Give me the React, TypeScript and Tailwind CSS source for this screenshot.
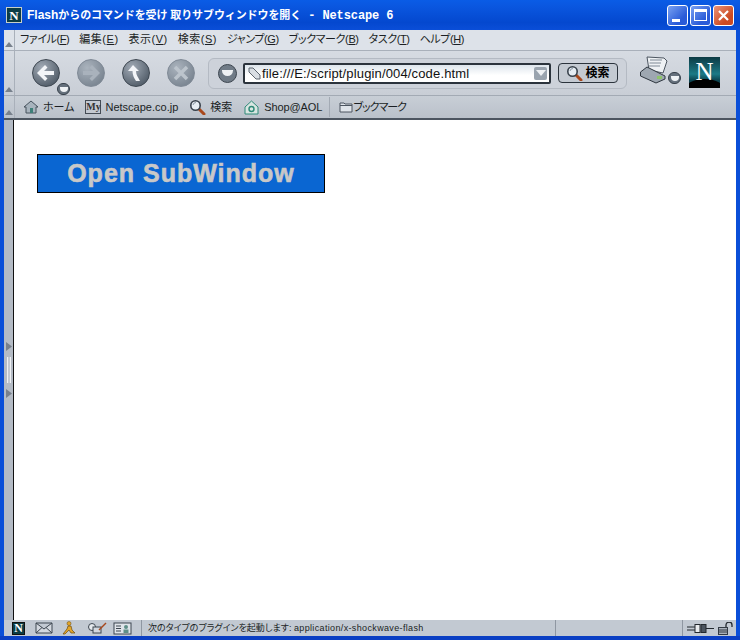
const jp = "font-['Liberation_Sans','Noto_Sans_CJK_JP',sans-serif] [font-feature-settings:'palt']";

function Grip({ className = "" }: { className?: string }) {
  return (
    <div className={`w-[11px] shrink-0 self-stretch flex items-end justify-center pb-[3px] border-r border-[#a9b0ba] ${className}`}>
      <svg width="8" height="5">
        <polygon points="4,0 8,5 0,5" fill="#77808c" />
      </svg>
    </div>
  );
}

function RoundBtn({ dim, children }: { dim?: boolean; children: React.ReactNode }) {
  return (
    <div
      className={`w-[28px] h-[28px] rounded-full flex items-center justify-center border ${
        dim
          ? "border-[#7f8995] bg-[radial-gradient(circle_at_35%_30%,#aab3bd,#7c8793_75%)]"
          : "border-[#3d4650] bg-[radial-gradient(circle_at_35%_30%,#a2abb6,#56616d_75%)]"
      }`}
    >
      {children}
    </div>
  );
}

function SmallDrop({ className = "" }: { className?: string }) {
  return (
    <div className={`w-[13px] h-[12px] rounded-full border border-[#37404a] bg-[#66717d] flex items-center justify-center ${className}`}>
      <div className="w-[8px] h-[5px] rounded-b-full bg-[#f0f3f6]" />
    </div>
  );
}

function Magnifier() {
  return (
    <svg width="17" height="16" viewBox="0 0 17 16">
      <line x1="10" y1="10" x2="15" y2="15" stroke="#a8481c" strokeWidth="3" strokeLinecap="round" />
      <circle cx="6.5" cy="6.5" r="4.7" fill="#e6edf3" stroke="#38414b" strokeWidth="1.6" />
      <path d="M4 6 a3 3 0 0 1 3-2.5" fill="none" stroke="#8e9aa6" />
    </svg>
  );
}

function NLogo({ size }: { size: "big" | "small" }) {
  if (size === "small") {
    return (
      <div className="w-[13px] h-[13px] bg-[#0b3c44] border border-[#111] flex items-center justify-center">
        <span className="font-['Liberation_Serif',serif] font-bold text-[12px] leading-none text-white">N</span>
      </div>
    );
  }
  return (
    <div className="relative w-[31px] h-[31px] overflow-hidden bg-[linear-gradient(#0c3a44,#1d7a86_55%,#0d4450_75%)] flex justify-center">
      <span className="relative z-10 font-['Liberation_Serif',serif] text-[25px] leading-[29px] text-white">N</span>
      <div className="absolute left-[-4px] right-[-4px] top-[22px] h-[20px] rounded-[50%] bg-black" />
    </div>
  );
}

function WinBtn({ className, children }: { className: string; children: React.ReactNode }) {
  return (
    <div className={`w-[21px] h-[21px] rounded-[3px] border border-white flex items-center justify-center ${className}`}>
      {children}
    </div>
  );
}

function BarItem({ icon, label, labelClass = "" }: { icon: React.ReactNode; label: string; labelClass?: string }) {
  return (
    <div className="flex items-center gap-[4px]">
      {icon}
      <span className={`text-[11px] leading-none text-[#1b1f24] whitespace-nowrap ${labelClass}`}>{label}</span>
    </div>
  );
}

function MenuItem({ label, hotkey, kanji }: { label: string; hotkey: string; kanji?: boolean }) {
  return (
    <span className={kanji ? "tracking-[0.5px]" : "tracking-[-0.4px]"}>
      {label}(<span className="underline">{hotkey}</span>)
    </span>
  );
}

export default function App() {
  return (
    <div className={`${jp} w-[740px] h-[640px] flex flex-col overflow-hidden bg-[#0a4fd8]`}>
      {/* title bar */}
      <div className="h-[30px] shrink-0 flex items-center pl-[6px] pr-[6px] bg-[linear-gradient(#0a5ce6,#0a57e0_20%,#0448cf_75%,#0a4ed8)]">
        <div className="w-[16px] h-[16px] bg-[#0c3c46] border border-[#c8d0c8] flex items-center justify-center">
          <span className="font-['Liberation_Serif',serif] font-bold text-[13px] leading-none text-white">N</span>
        </div>
        <span className="ml-[5px] text-[12px] font-bold text-white whitespace-nowrap">
          Flash<span className="text-[11px] [font-feature-settings:normal] tracking-[-0.1px]">からのコマンドを受け 取りサブウィンドウを開く</span>
          <span className="font-['Liberation_Mono',monospace] tracking-[-0.1px]"> - Netscape 6</span>
        </span>
        <div className="ml-auto flex gap-[2px]">
          <WinBtn className="bg-[linear-gradient(135deg,#7aa2f2,#2a5bd8_70%)]">
            <div className="w-[8px] h-[3px] bg-white mt-[10px] -ml-[3px]" />
          </WinBtn>
          <WinBtn className="bg-[linear-gradient(135deg,#7aa2f2,#2a5bd8_70%)]">
            <div className="w-[13px] h-[12px] border border-white border-t-[3px]" />
          </WinBtn>
          <WinBtn className="bg-[linear-gradient(135deg,#ea9478,#cc4a22_70%)]">
            <svg width="13" height="13">
              <path d="M2 2 L11 11 M11 2 L2 11" stroke="white" strokeWidth="2.2" />
            </svg>
          </WinBtn>
        </div>
      </div>

      {/* window body inside blue frame */}
      <div className="flex-1 min-h-0 mx-[4px] flex flex-col">
        {/* menu bar */}
        <div className="h-[21px] shrink-0 flex bg-[#dde2e9] border-b border-[#a9b0ba]">
          <Grip />
          <div className="flex items-center gap-[10px] pl-[5px] pb-[2px] text-[11px] text-[#1b1f24] whitespace-nowrap">
            <MenuItem label="ファイル" hotkey="F" />
            <MenuItem label="編集" hotkey="E" kanji />
            <MenuItem label="表示" hotkey="V" kanji />
            <MenuItem label="検索" hotkey="S" kanji />
            <MenuItem label="ジャンプ" hotkey="G" />
            <MenuItem label="ブックマーク" hotkey="B" />
            <MenuItem label="タスク" hotkey="T" />
            <MenuItem label="ヘルプ" hotkey="H" />
          </div>
        </div>

        {/* navigation toolbar */}
        <div className="h-[45px] shrink-0 flex bg-[linear-gradient(#d6dbe2,#c9ced6)] border-b border-[#a3aab4]">
          <Grip />
          <div className="flex-1 flex items-center pl-[17px]">
            <div className="relative">
              <RoundBtn>
                <svg width="22" height="22" viewBox="0 0 22 22">
                  <path d="M2 11 L10 3 L12.5 5.5 L9 9 H19 V13 H9 L12.5 16.5 L10 19 Z" fill="#f3f5f8" />
                </svg>
              </RoundBtn>
              <SmallDrop className="absolute left-[25px] top-[24px]" />
            </div>
            <div className="ml-[17px]">
              <RoundBtn dim>
                <svg width="22" height="22" viewBox="0 0 22 22">
                  <path d="M20 11 L12 3 L9.5 5.5 L13 9 H3 V13 H13 L9.5 16.5 L12 19 Z" fill="#a9b2bc" />
                </svg>
              </RoundBtn>
            </div>
            <div className="ml-[17px]">
              <RoundBtn>
                <svg width="22" height="22" viewBox="0 0 22 22">
                  <path d="M8 3 L14 9 H11 C11 13 13 15 15 19 H11 C9 16 7.5 13 7.5 9 H3 Z" fill="#f3f5f8" />
                </svg>
              </RoundBtn>
            </div>
            <div className="ml-[17px]">
              <RoundBtn dim>
                <svg width="20" height="20" viewBox="0 0 20 20">
                  <path d="M4 4 L16 16 M16 4 L4 16" stroke="#bcc4cc" strokeWidth="3.5" />
                </svg>
              </RoundBtn>
            </div>

            {/* url group */}
            <div className="ml-[13px] w-[419px] h-[31px] rounded-[6px] border border-[#b4bac3] bg-[#cdd2da] flex items-center pl-[9px]">
              <div className="w-[19px] h-[19px] rounded-full border border-[#3d4650] bg-[#707b87] flex items-center justify-center">
                <div className="w-[11px] h-[6px] rounded-b-full bg-[#eef1f4]" />
              </div>
              <div className="ml-[6px] w-[308px] h-[21px] flex items-center border-2 border-[#2b333c] rounded-[2px] bg-[linear-gradient(#dde5ec,#ffffff_60%)] pl-[2px] pr-[2px]">
                <svg width="15" height="15" viewBox="0 0 15 15" className="shrink-0">
                  <path d="M2 2 L6 2 L13 9 L13 13 L9 13 L2 6 Z" fill="#d9dee4" stroke="#5d6670" />
                </svg>
                <span className="font-['Liberation_Sans',sans-serif] text-[13px] leading-none text-[#111] whitespace-nowrap tracking-[0.15px]">
                  file:///E:/script/plugin/004/code.html
                </span>
                <div className="ml-auto w-[13px] h-[13px] bg-[#9aa4af] rounded-[2px] flex items-center justify-center">
                  <div className="w-0 h-0 border-x-[5px] border-x-transparent border-t-[6px] border-t-[#eef1f4]" />
                </div>
              </div>
              <div className="ml-[7px] w-[60px] h-[20px] rounded-[4px] border border-[#2b333c] bg-[#c4cad2] flex items-center justify-center gap-[2px]">
                <Magnifier />
                <span className="text-[12px] leading-none font-bold text-black">検索</span>
              </div>
            </div>

            {/* printer and logo */}
            <div className="relative ml-[13px] w-[42px] h-[30px] -mt-[4px]">
              <svg width="30" height="28" viewBox="0 0 30 28">
                <path d="M7 1 L24 2 L27 5 L23 17 L9 14 Z" fill="#eef1f4" stroke="#4c5560" />
                <path d="M10 4 H22 M9.5 7 H21 M9 10 H20" stroke="#7f8995" />
                <path d="M0.5 16 L7 11 L25 20 L25 23 L16 27 L0.5 20 Z" fill="#9ea7b1" stroke="#2f3740" />
                <rect x="17" y="20" width="5" height="3" fill="#8ec46a" />
              </svg>
              <SmallDrop className="absolute left-[28px] top-[16px]" />
            </div>
            <div className="ml-[7px] -mt-[2px]">
              <NLogo size="big" />
            </div>
          </div>
        </div>

        {/* personal toolbar */}
        <div className="h-[24px] shrink-0 flex bg-[linear-gradient(#c8ced6,#bac1ca)] border-b-2 border-[#4c5560]">
          <Grip />
          <div className="flex items-center pl-[8px]">
            <BarItem
              label="ホーム"
              icon={
                <svg width="16" height="14" viewBox="0 0 16 14">
                  <path d="M1 7 L8 1 L15 7 H13 V13 H3 V7 Z" fill="#a7b3bd" stroke="#46525d" />
                  <rect x="7" y="8" width="3" height="5" fill="#3e7f78" />
                </svg>
              }
            />
            <div className="ml-[11px]">
              <BarItem
                label="Netscape.co.jp"
                icon={
                  <div className="w-[16px] h-[14px] border border-[#444c55] bg-[#c3c9d1] flex items-center justify-center font-['Liberation_Serif',serif] font-bold text-[10px] leading-none text-[#333]">
                    My
                  </div>
                }
              />
            </div>
            <div className="ml-[11px]">
              <BarItem label="検索" icon={<Magnifier />} />
            </div>
            <div className="ml-[12px]">
              <BarItem
                label="Shop@AOL"
                labelClass="ml-[1px] tracking-[-0.1px]"
                icon={
                  <svg width="15" height="15" viewBox="0 0 15 15">
                    <path d="M1 7 L7.5 1 L14 7 V14 H1 Z" fill="#d9e6e2" stroke="#2f8a78" />
                    <circle cx="7.5" cy="9" r="2.5" fill="none" stroke="#2f8a78" strokeWidth="1.4" />
                  </svg>
                }
              />
            </div>
            <div className="ml-[7px] h-[20px] border-l border-[#a3aab4] pl-[9px]">
              <div className="h-full flex items-center">
                <BarItem
                  label="ブックマーク"
                  labelClass="tracking-[-1px]"
                  icon={
                    <svg width="14" height="12" viewBox="0 0 14 12" className="-mr-[4px]">
                      <path d="M1 2 H5 L6 3 H13 V11 H1 Z M1 4.5 H13" fill="#dfe4ea" stroke="#4c5560" />
                    </svg>
                  }
                />
              </div>
            </div>
          </div>
        </div>

        {/* content with sidebar grip */}
        <div className="flex-1 min-h-0 flex">
          <div className="w-[10px] shrink-0 bg-[#b4bbc5] border-r border-[#111] flex flex-col items-center justify-center gap-[6px]">
            <svg width="6" height="9">
              <polygon points="0,0 6,4.5 0,9" fill="#77808c" />
            </svg>
            <div className="w-[4px] h-[26px] bg-[#c3c9d1] border-x border-[#eef0f3]" />
            <svg width="6" height="9">
              <polygon points="0,0 6,4.5 0,9" fill="#77808c" />
            </svg>
          </div>
          <div className="flex-1 bg-white pt-[34px] pl-[23px]">
            <div className="w-[288px] h-[39px] bg-[#0a66d2] border border-black flex items-center justify-center">
              <span className="font-['Liberation_Sans',sans-serif] font-bold text-[25px] leading-none text-[#c8c8c8] tracking-[1px] [-webkit-text-stroke:0.6px_#c8c8c8]">
                Open SubWindow
              </span>
            </div>
          </div>
        </div>

        {/* status bar */}
        <div className="h-[16px] shrink-0 flex items-center bg-[#c2c9d2]">
          <div className="w-[138px] flex items-center pl-[8px] border-r border-[#8f97a2] h-full">
            <NLogo size="small" />
            <svg width="18" height="12" viewBox="0 0 18 12" className="ml-[10px]">
              <path d="M1 1 H17 V11 H1 Z M1 1 L9 7 L17 1 M1 11 L7 5.5 M17 11 L11 5.5" fill="#d3d8df" stroke="#3d4650" />
            </svg>
            <svg width="14" height="14" viewBox="0 0 14 14" className="ml-[9px]">
              <circle cx="7" cy="2.5" r="2" fill="#e3a62a" stroke="#6b4a10" strokeWidth="0.5" />
              <path d="M6 5 L9 5 L10 9 L13 12 H9 L7 9 L3 13 H1 L5 8 Z" fill="#e3a62a" stroke="#6b4a10" strokeWidth="0.7" />
            </svg>
            <svg width="20" height="12" viewBox="0 0 20 12" className="ml-[11px]">
              <circle cx="5" cy="5" r="3.5" fill="#e6eaee" stroke="#3d4650" />
              <rect x="6" y="5" width="8" height="6" fill="#d3d8df" stroke="#3d4650" />
              <path d="M12 8 L19 1" stroke="#a8481c" strokeWidth="1.5" />
            </svg>
            <svg width="19" height="13" viewBox="0 0 19 13" className="ml-[6px]">
              <rect x="1" y="1" width="17" height="11" fill="#dfe4ea" stroke="#3d4650" />
              <path d="M3 4 H8 M3 6.5 H8 M3 9 H8" stroke="#3d4650" />
              <circle cx="13" cy="5" r="2" fill="#5f8f88" />
              <rect x="10.5" y="7.5" width="5" height="3.5" fill="#5f8f88" />
            </svg>
          </div>
          <div className="w-[414px] h-full pl-[6px] flex items-center border-r border-[#8f97a2]">
            <span className="text-[9px] leading-none text-[#1b1f24] whitespace-nowrap">
              次のタイプのプラグインを起動します: <span className="tracking-[0.35px]">application/x-shockwave-flash</span>
            </span>
          </div>
          <div className="flex-1 h-full border-r border-[#8f97a2]" />
          <div className="w-[35px] h-full flex items-center justify-center">
            <svg width="27" height="9" viewBox="0 0 27 9">
              <path d="M0 3 H8 M0 6 H8 M19 4.5 H27" stroke="#22282e" />
              <rect x="8" y="0.5" width="5" height="8" fill="#e8ebee" stroke="#22282e" />
              <rect x="14" y="0.5" width="5" height="8" fill="#4c5560" stroke="#22282e" />
            </svg>
          </div>
          <div className="w-[18px] h-full flex items-center justify-start">
            <svg width="16" height="13" viewBox="0 0 16 13">
              <rect x="0.5" y="5.5" width="9" height="7" fill="#a9b0ba" stroke="#333b44" />
              <path d="M0.5 8 H9.5 M0.5 10 H9.5" stroke="#333b44" />
              <path d="M8 5 V3 a3 3 0 0 1 6 0 V5" fill="none" stroke="#22282e" strokeWidth="1.3" />
            </svg>
          </div>
        </div>
      </div>
      <div className="h-[4px] shrink-0 bg-[#0a3fc4]" />
    </div>
  );
}
